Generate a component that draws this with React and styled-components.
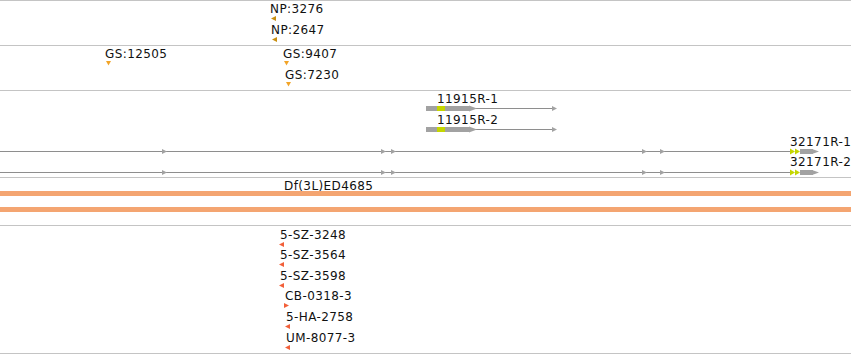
import React from 'react'
import styled, { createGlobalStyle } from 'styled-components'

const GlobalStyle = createGlobalStyle`
  html, body { margin: 0; padding: 0; background: #fff; }
  body { font-family: "DejaVu Sans", Verdana, sans-serif; overflow: hidden; }
`

const Browser = styled.div`
  width: 851px;
  display: flex;
  flex-direction: column;
`

const Lane = styled.div`
  position: relative;
  height: ${p => p.$h}px;
  border-top: 1px solid #c4c4c4;
  border-bottom: ${p => (p.$last ? '1px solid #c4c4c4' : 'none')};
  overflow: hidden;
`

const Feature = styled.div`
  position: absolute;
  left: ${p => p.$x}px;
  top: ${p => p.$y}px;
  display: flex;
  flex-direction: column;
  align-items: flex-start;
`

const Label = styled.span`
  font-size: 12px;
  line-height: 14px;
  letter-spacing: 0.4px;
  color: #111;
  white-space: nowrap;
  margin-left: ${p => p.$nudge ?? -1}px;
`

const FloatLabel = styled(Label)`
  position: absolute;
  left: ${p => p.$x}px;
  top: ${p => p.$y}px;
  margin-left: 0;
`

const Canvas = styled.svg`
  position: absolute;
  left: 0;
  top: 0;
`

const Band = styled.div`
  position: absolute;
  left: 0;
  right: 0;
  top: ${p => p.$y}px;
  height: 5px;
  background: #f4a571;
`

const shapes = {
  left: '5,0 5,5 0,2.5',
  right: '0,0 0,5 5,2.5',
  down: '0,0 5,0 2.5,4.5',
}

const Marker = ({ dir, color }) => (
  <svg width="5" height="5" viewBox="0 0 5 5" style={{ display: 'block' }}>
    <polygon points={shapes[dir]} fill={color} />
  </svg>
)

const np = [
  { name: 'NP:3276', x: 271, y: 1 },
  { name: 'NP:2647', x: 272, y: 22 },
]

const gs = [
  { name: 'GS:12505', x: 106, y: 1 },
  { name: 'GS:9407', x: 284, y: 1 },
  { name: 'GS:7230', x: 286, y: 22 },
]

const probes = [
  { name: '5-SZ-3248', x: 279, y: 2, dir: 'left' },
  { name: '5-SZ-3564', x: 279, y: 22, dir: 'left' },
  { name: '5-SZ-3598', x: 279, y: 43, dir: 'left' },
  { name: 'CB-0318-3', x: 284, y: 63, dir: 'right' },
  { name: '5-HA-2758', x: 285, y: 84, dir: 'left' },
  { name: 'UM-8077-3', x: 285, y: 105, dir: 'left' },
]

const GRAY = '#a2a2a2'
const LINE = '#8e8e8e'
const YELLOW = '#c4d600'

const Arrow = ({ x, y }) => (
  <polygon points={`${x},${y - 2.5} ${x},${y + 2.5} ${x + 5},${y}`} fill={GRAY} />
)

// short transcript, 11915R
const ShortModel = ({ y }) => (
  <g>
    <line x1="470" x2="555" y1={y} y2={y} stroke={LINE} strokeWidth="1" />
    <rect x="426" y={y - 2.5} width="44" height="5" fill={GRAY} />
    <rect x="437" y={y - 2.5} width="8" height="5" fill={YELLOW} />
    <polygon points={`469,${y - 3} 469,${y + 3} 477,${y}`} fill={GRAY} />
    <Arrow x={552} y={y} />
  </g>
)

// long transcript, 32171R
const LongModel = ({ y }) => (
  <g>
    <line x1="0" x2="792" y1={y} y2={y} stroke={LINE} strokeWidth="1" />
    {[162, 381, 391, 642, 660].map(x => (
      <Arrow key={x} x={x} y={y} />
    ))}
    <polygon points={`790,${y - 3} 790,${y + 3} 795,${y}`} fill={YELLOW} />
    <polygon points={`795,${y - 3} 795,${y + 3} 800,${y}`} fill={YELLOW} />
    <rect x="800" y={y - 2.5} width="13" height="5" fill={GRAY} />
    <polygon points={`812,${y - 2.5} 812,${y + 2.5} 819,${y}`} fill={GRAY} />
  </g>
)

export default function App() {
  return (
    <>
      <GlobalStyle />
      <Browser>
        <Lane $h={44}>
          {np.map(f => (
            <Feature key={f.name} $x={f.x} $y={f.y}>
              <Label>{f.name}</Label>
              <Marker dir="left" color="#c98f10" />
            </Feature>
          ))}
        </Lane>

        <Lane $h={44}>
          {gs.map(f => (
            <Feature key={f.name} $x={f.x} $y={f.y}>
              <Label>{f.name}</Label>
              <Marker dir="down" color="#f2a428" />
            </Feature>
          ))}
        </Lane>

        <Lane $h={86}>
          <Canvas width="851" height="86">
            <ShortModel y={17.5} />
            <ShortModel y={38.5} />
            <LongModel y={60.5} />
            <LongModel y={81.5} />
          </Canvas>
          <FloatLabel $x={437} $y={1}>11915R-1</FloatLabel>
          <FloatLabel $x={437} $y={22}>11915R-2</FloatLabel>
          <FloatLabel $x={790} $y={44}>32171R-1</FloatLabel>
          <FloatLabel $x={790} $y={64}>32171R-2</FloatLabel>
        </Lane>

        <Lane $h={47}>
          <FloatLabel $x={284} $y={1}>Df(3L)ED4685</FloatLabel>
          <Band $y={13} />
          <Band $y={29} />
        </Lane>

        <Lane $h={127} $last>
          {probes.map(f => (
            <Feature key={f.name} $x={f.x} $y={f.y}>
              <Label $nudge={1}>{f.name}</Label>
              <Marker dir={f.dir} color="#f2603a" />
            </Feature>
          ))}
        </Lane>
      </Browser>
    </>
  )
}
